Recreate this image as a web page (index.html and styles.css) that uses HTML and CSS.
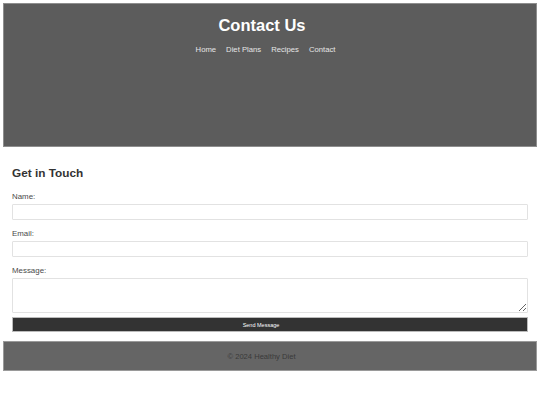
FILE: index.html
```html
<!DOCTYPE html>
<html>
<head>
<meta charset="utf-8">
<title>Contact Us</title>
<link rel="stylesheet" href="styles.css">
</head>
<body>
<header class="site-header">
  <h1 class="title">Contact Us</h1>
  <nav class="nav">
    <a href="#">Home</a>
    <a href="#">Diet Plans</a>
    <a href="#">Recipes</a>
    <a href="#">Contact</a>
  </nav>
</header>
<main class="content">
  <h2 class="heading">Get in Touch</h2>
  <form class="form">
    <label class="label">Name:</label>
    <input class="field" type="text">
    <label class="label">Email:</label>
    <input class="field" type="email">
    <label class="label">Message:</label>
    <textarea class="field area"></textarea>
    <button class="send" type="button">Send Message</button>
  </form>
</main>
<footer class="site-footer">© 2024 Healthy Diet</footer>
</body>
</html>
```
FILE: styles.css
```css
* { box-sizing: border-box; }
body {
  margin: 3px;
  font-family: "Liberation Sans", Arial, sans-serif;
  background: #fff;
  color: #333;
}
.site-header {
  height: 144px;
  background: #5c5c5c;
  border: 1px solid #8e8e8e;
  padding-top: 11px;
  text-align: center;
}
.title {
  margin: 0;
  padding-right: 16px;
  font-size: 16.5px;
  line-height: 21px;
  color: #fff;
  font-weight: bold;
}
.nav {
  margin-top: 9px;
  padding-right: 9px;
  display: flex;
  justify-content: center;
  gap: 10px;
  font-size: 7.7px;
  line-height: 10px;
}
.nav a {
  color: #e6e6e6;
  text-decoration: none;
}
.content {
  padding: 19px 9px 9px;
}
.heading {
  margin: 0 0 11px;
  font-size: 11.8px;
  line-height: 15px;
  font-weight: bold;
  color: #333;
}
.form {
  display: flex;
  flex-direction: column;
}
.label {
  font-size: 7.9px;
  line-height: 10px;
  color: #4a4a4a;
  margin-bottom: 2px;
}
.field {
  display: block;
  width: 100%;
  height: 16px;
  margin: 0 0 9px;
  border: 1px solid #e2e2e2;
  border-radius: 1px;
  background: #fff;
  padding: 0;
}
.area {
  height: 35px;
  margin-bottom: 4px;
  resize: vertical;
}
.send {
  height: 15px;
  background: #333;
  color: #fff;
  border: 1px solid #bbb;
  font-family: "Liberation Sans", Arial, sans-serif;
  font-size: 5.5px;
  padding: 0 18px 0 0;
}
.site-footer {
  height: 30px;
  background: #656565;
  border: 1px solid #9a9a9a;
  color: #3a3a3a;
  font-size: 7.6px;
  padding-right: 17px;
  display: flex;
  align-items: center;
  justify-content: center;
}
```
